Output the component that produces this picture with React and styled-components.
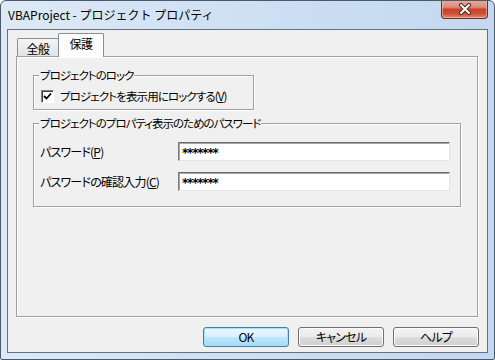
import styled, { createGlobalStyle } from 'styled-components'

const GlobalStyle = createGlobalStyle`
  html, body {
    margin: 0;
    padding: 0;
    background: #ffffff;
  }
  body {
    font-family: "Noto Sans CJK JP", "Noto Sans", sans-serif;
    font-size: 12px;
    color: #000;
    font-feature-settings: "palt";
  }
`

function CloseGlyph() {
  return (
    <svg width="14" height="12" viewBox="0 0 14 12">
      <path d="M3 2 L11 10 M11 2 L3 10" stroke="#4a2a24" strokeWidth="4" strokeLinecap="round" />
      <path d="M3 2 L11 10 M11 2 L3 10" stroke="#ffffff" strokeWidth="2" strokeLinecap="round" />
    </svg>
  )
}

function CheckMark() {
  return (
    <svg width="9" height="9" viewBox="0 0 9 9">
      <path d="M1 4 L3.5 6.5 L8 1.5" stroke="#000" strokeWidth="1.8" fill="none" />
    </svg>
  )
}

function App() {
  return (
    <>
      <GlobalStyle />
      <Window>
        <TitleBar>
          <Title>VBAProject - プロジェクト プロパティ</Title>
          <CloseButton>
            <CloseGlyph />
          </CloseButton>
        </TitleBar>
        <Client>
          <TabStrip>
            <Tab>全般</Tab>
            <Tab selected>保護</Tab>
          </TabStrip>
          <Panel>
            <GroupBox width={221} height={35}>
              <Legend>プロジェクトのロック</Legend>
              <CheckRow>
                <CheckBox>
                  <CheckMark />
                </CheckBox>
                <Caption>
                  プロジェクトを表示用にロックする(<u>V</u>)
                </Caption>
              </CheckRow>
            </GroupBox>
            <GroupBox width={428} height={84}>
              <Legend>プロジェクトのプロパティ表示のためのパスワード</Legend>
              <FieldList>
                <FieldRow>
                  <FieldLabel>
                    パスワード(<u>P</u>)
                  </FieldLabel>
                  <TextInput>*******</TextInput>
                </FieldRow>
                <FieldRow>
                  <FieldLabel>
                    パスワードの確認入力(<u>C</u>)
                  </FieldLabel>
                  <TextInput>*******</TextInput>
                </FieldRow>
              </FieldList>
            </GroupBox>
          </Panel>
          <ButtonRow>
            <Button primary>OK</Button>
            <Button>キャンセル</Button>
            <Button>ヘルプ</Button>
          </ButtonRow>
        </Client>
      </Window>
    </>
  )
}

export default App

const Window = styled.div`
  width: 495px;
  height: 360px;
  box-sizing: border-box;
  border: 1px solid #4b5a6b;
  border-radius: 6px 6px 2px 2px;
  background: linear-gradient(to right, #dde9f6 0%, #cbdef3 60%, #c3d8f0 100%);
  display: flex;
  flex-direction: column;
  overflow: hidden;
`

const TitleBar = styled.div`
  height: 28px;
  display: flex;
  justify-content: space-between;
  align-items: flex-start;
  padding: 0 6px 0 7px;
`

const Title = styled.div`
  line-height: 27px;
  font-size: 12px;
  font-feature-settings: normal;
  color: #000;
  white-space: nowrap;
`

const CloseButton = styled.div`
  width: 47px;
  height: 19px;
  margin-top: -1px;
  box-sizing: border-box;
  border: 1px solid #6e2a1e;
  border-top: none;
  border-radius: 0 0 4px 4px;
  background: linear-gradient(
    #e8ac9d 0%,
    #dd8a78 40%,
    #c7432c 52%,
    #cc4f37 75%,
    #e0876c 100%
  );
  box-shadow: inset 0 0 0 1px rgba(255, 220, 210, 0.5);
  display: flex;
  align-items: center;
  justify-content: center;
`

const Client = styled.div`
  flex: 1;
  margin: 0 6px 6px 6px;
  border: 1px solid #627184;
  background: #f0f0f0;
  display: flex;
  flex-direction: column;
  padding: 0 8px 0 8px;
`

const TabStrip = styled.div`
  height: 26px;
  display: flex;
  align-items: flex-end;
  padding-left: 1px;
`

const Tab = styled.div`
  box-sizing: border-box;
  width: ${p => (p.selected ? '46px' : '42px')};
  height: ${p => (p.selected ? '24px' : '18px')};
  margin-left: ${p => (p.selected ? '-1px' : '0')};
  margin-bottom: ${p => (p.selected ? '-1px' : '0')};
  border: 1px solid #8a8d94;
  border-bottom: none;
  border-radius: 2px 2px 0 0;
  background: ${p =>
    p.selected ? '#fdfdfd' : 'linear-gradient(#f4f4f4, #e3e3e3)'};
  position: relative;
  z-index: ${p => (p.selected ? 2 : 1)};
  display: flex;
  align-items: center;
  justify-content: center;
  padding-top: ${p => (p.selected ? '0' : '1px')};
  padding-bottom: ${p => (p.selected ? '5px' : '0')};
  font-size: 12px;
  letter-spacing: -0.5px;
`

const etched = `
  border: 1px solid #a0a0a0;
  box-shadow: inset 1px 1px 0 #ffffff, 1px 1px 0 #ffffff;
`

const Panel = styled.div`
  width: 462px;
  height: 261px;
  box-sizing: border-box;
  ${etched}
  background: #f0f0f0;
  padding: 18px 0 0 16px;
  display: flex;
  flex-direction: column;
  gap: 13px;
`

const GroupBox = styled.div`
  position: relative;
  box-sizing: border-box;
  width: ${p => p.width}px;
  height: ${p => p.height}px;
  ${etched}
`

const Legend = styled.span`
  position: absolute;
  left: 5px;
  top: -9px;
  padding: 0 1px;
  background: #f0f0f0;
  line-height: 16px;
  font-size: 11.5px;
  letter-spacing: -1px;
  white-space: nowrap;
`

const CheckRow = styled.div`
  display: flex;
  align-items: center;
  gap: 6px;
  padding: 13px 0 0 7px;
  line-height: 14px;
  white-space: nowrap;
`

const Caption = styled.span`
  font-size: 11.5px;
  letter-spacing: -0.9px;
`

const CheckBox = styled.div`
  width: 11px;
  height: 11px;
  border: 1px solid;
  border-color: #808080 #ffffff #ffffff #808080;
  box-shadow: inset 1px 1px 0 #404040;
  background: #ffffff;
  display: flex;
  align-items: center;
  justify-content: center;
`

const FieldList = styled.div`
  display: flex;
  flex-direction: column;
  gap: 11px;
  padding: 18px 0 0 6px;
`

const FieldRow = styled.div`
  display: flex;
  align-items: center;
`

const FieldLabel = styled.div`
  width: 138px;
  white-space: nowrap;
  letter-spacing: -0.8px;
`

const TextInput = styled.div`
  box-sizing: border-box;
  width: 272px;
  height: 19px;
  border: 1px solid;
  border-color: #6a6a6a #e3e3e3 #e3e3e3 #7a7a7a;
  box-shadow: inset 1px 1px 0 #a8a8a8;
  background: #ffffff;
  padding: 1px 0 0 3px;
  line-height: 18px;
  font-family: "DejaVu Sans", sans-serif;
  font-size: 12px;
  font-weight: bold;
  letter-spacing: -1.2px;
`

const ButtonRow = styled.div`
  display: flex;
  justify-content: flex-end;
  gap: 9px;
  padding: 10px 0 0 0;
`

const Button = styled.div`
  box-sizing: border-box;
  width: 86px;
  height: 20px;
  border: 1px solid ${p => (p.primary ? '#3c7fb1' : '#707070')};
  border-radius: 3px;
  background: ${p =>
    p.primary
      ? 'linear-gradient(#eaf6fd 0%, #d9f0fc 50%, #bee6fd 51%, #a7d9f5 100%)'
      : 'linear-gradient(#f2f2f2 0%, #ebebeb 50%, #dddddd 51%, #cfcfcf 100%)'};
  box-shadow: inset 0 0 0 1px ${p => (p.primary ? '#a6e0f9' : '#fcfcfc')};
  display: flex;
  align-items: center;
  justify-content: center;
  font-size: 12px;
  line-height: 18px;
  letter-spacing: -0.8px;
`
